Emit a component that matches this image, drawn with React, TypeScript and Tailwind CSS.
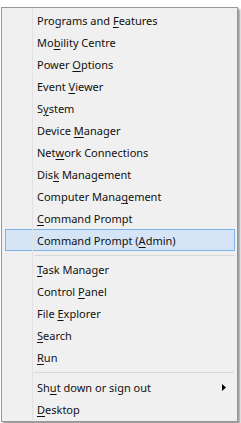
import React from "react";

type Item = { pre: string; key: string; post: string; active?: boolean; sub?: boolean };

const groups: Item[][] = [
  [
    { pre: "Programs and ", key: "F", post: "eatures" },
    { pre: "Mo", key: "b", post: "ility Centre" },
    { pre: "Power ", key: "O", post: "ptions" },
    { pre: "Event ", key: "V", post: "iewer" },
    { pre: "S", key: "y", post: "stem" },
    { pre: "Device ", key: "M", post: "anager" },
    { pre: "Net", key: "w", post: "ork Connections" },
    { pre: "Dis", key: "k", post: " Management" },
    { pre: "Computer Mana", key: "g", post: "ement" },
    { pre: "", key: "C", post: "ommand Prompt" },
    { pre: "Command Prompt (", key: "A", post: "dmin)", active: true },
  ],
  [
    { pre: "", key: "T", post: "ask Manager" },
    { pre: "Control ", key: "P", post: "anel" },
    { pre: "File ", key: "E", post: "xplorer" },
    { pre: "", key: "S", post: "earch" },
    { pre: "", key: "R", post: "un" },
  ],
  [
    { pre: "Sh", key: "u", post: "t down or sign out", sub: true },
    { pre: "", key: "D", post: "esktop" },
  ],
];

function Row({ item }: { item: Item }) {
  return (
    <div className="relative flex h-[22px] items-center">
      {item.active && (
        <div className="absolute inset-y-0 left-[2px] right-[1px] border border-[#7db3e8] bg-[#d5e5f6]" />
      )}
      <div className="relative h-full w-[30px] shrink-0 border-r border-[#e2e2e2]" />
      <span className="relative pl-[4px] pt-[1px] text-[#111]">
        {item.pre}
        <span className="underline decoration-1 underline-offset-[2px]">{item.key}</span>
        {item.post}
      </span>
      {item.sub && (
        <svg className="relative ml-auto mr-[10px]" width="4" height="7" viewBox="0 0 4 7">
          <polygon points="0,0 4,3.5 0,7" fill="#000" />
        </svg>
      )}
    </div>
  );
}

function Separator({ tall }: { tall?: boolean }) {
  return (
    <div className={tall ? "flex h-[8px]" : "flex h-[7px]"}>
      <div className="h-full w-[30px] shrink-0 border-r border-[#e2e2e2]" />
      <div className="ml-[1px] mr-[2px] mt-[4px] h-[1px] flex-1 bg-[#d7d7d7]" />
    </div>
  );
}

export default function App() {
  return (
    <div className="h-[423px] w-[241px] overflow-hidden bg-white pl-[1px] pt-[7px]">
      <div
        className="w-[237px] border border-[#979797] bg-[#f0f0f0] px-[1px] py-[1px] text-[11px] leading-none shadow-[2px_2px_2px_rgba(0,0,0,0.4)]"
        style={{ fontFamily: '"Noto Sans", "Open Sans", sans-serif' }}
      >
        {groups.map((g, gi) => (
          <div key={gi}>
            {gi > 0 && <Separator tall={gi === 2} />}
            {g.map((item) => (
              <Row key={item.pre + item.key} item={item} />
            ))}
          </div>
        ))}
      </div>
    </div>
  );
}
